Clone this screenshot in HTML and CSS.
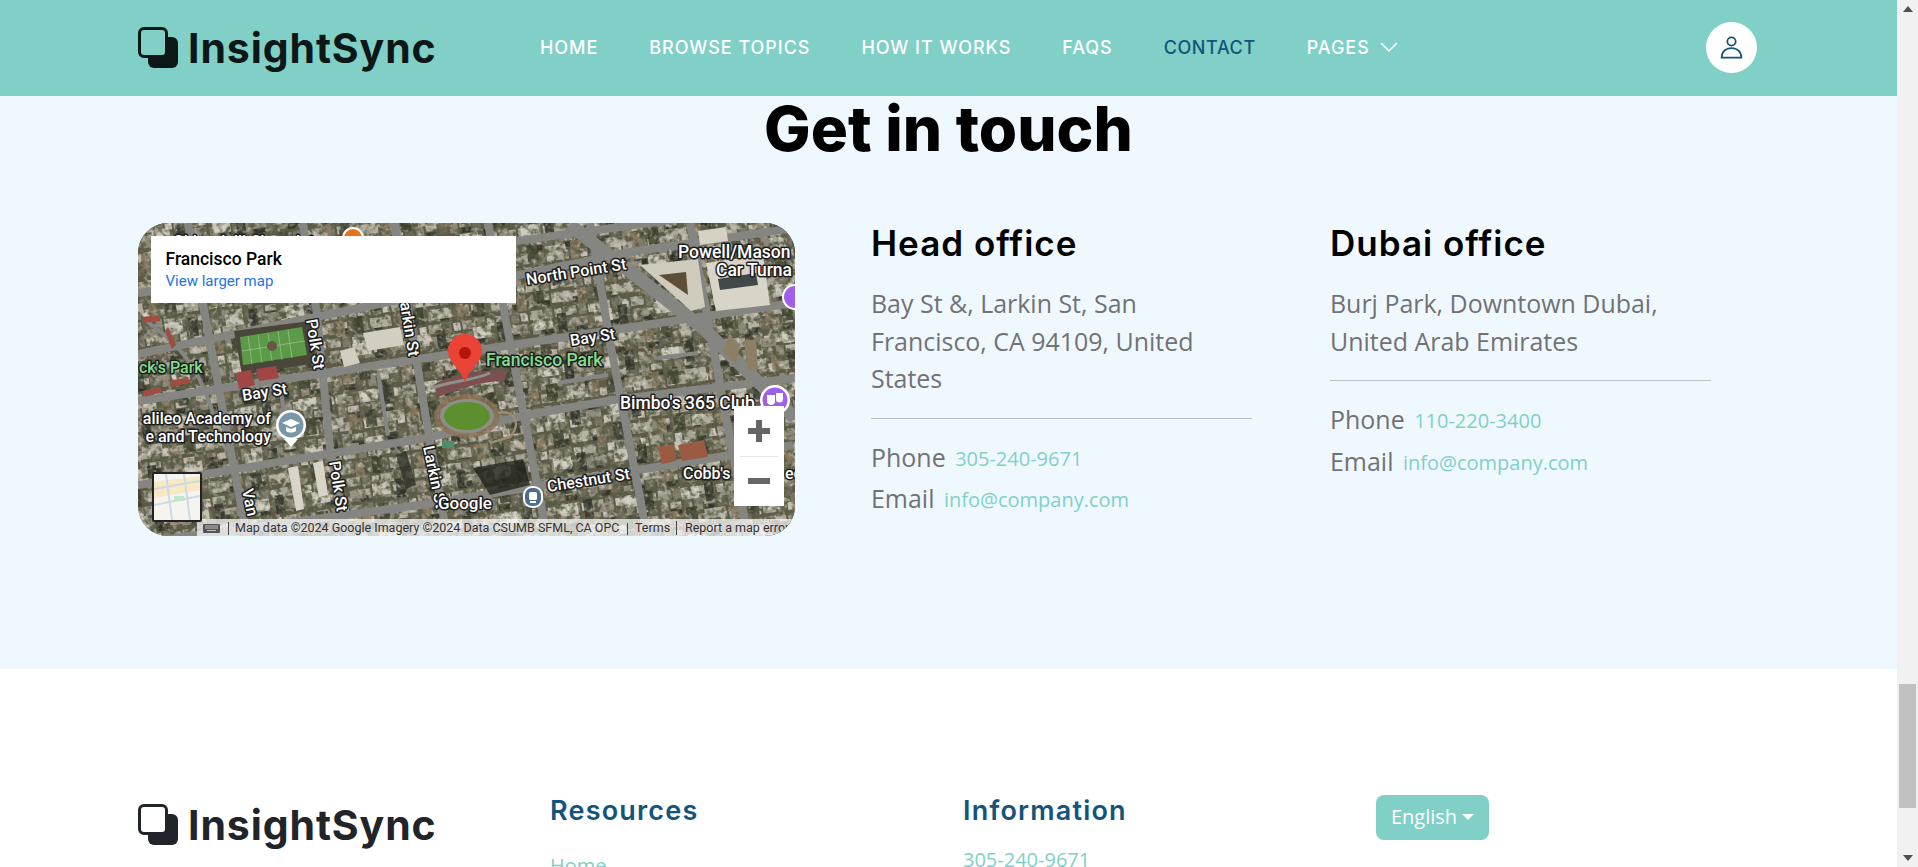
FILE: index.html
```html
<!DOCTYPE html>
<html lang="en">
<head>
<meta charset="utf-8">
<title>InsightSync - Contact</title>
<link rel="stylesheet" href="styles.css">
</head>
<body>
<div class="page">
  <header class="topbar">
    <a class="brand" href="#">
      <svg class="brand-icon" viewBox="0 0 40 42"><rect x="10" y="10" width="30" height="31" rx="6" fill="#0d1716"/><rect x="1.5" y="1.5" width="27" height="28" rx="4.5" fill="#80d0c7" stroke="#0d1716" stroke-width="3"/></svg>
      <span class="brand-name">InsightSync</span>
    </a>
    <nav class="menu">
      <a href="#">HOME</a>
      <a href="#">BROWSE TOPICS</a>
      <a href="#">HOW IT WORKS</a>
      <a href="#">FAQS</a>
      <a href="#" class="active">CONTACT</a>
      <a href="#" class="with-chevron">PAGES
        <svg class="chevron" viewBox="0 0 18 10"><path d="M1 1l8 8 8-8" fill="none" stroke="#fff" stroke-width="1.6"/></svg>
      </a>
    </nav>
    <a class="avatar" href="#" aria-label="Profile">
      <svg viewBox="0 0 24 24" width="25" height="25"><circle cx="12" cy="6.2" r="4" fill="none" stroke="#13547a" stroke-width="1.7"/><path d="M2.500 21.800c0-5.500 4-9.300 9.500-9.300s9.500 3.800 9.500 9.300z" fill="none" stroke="#13547a" stroke-width="1.7"/></svg>
    </a>
  </header>

  <section class="contact">
    <h2 class="contact-title">Get in touch</h2>
    <div class="contact-grid">
      <div class="map-cell">
        <div class="map">
          <svg class="map-art" viewBox="0 0 657 313" width="657" height="313">
            <defs>
              <pattern id="lots" width="34" height="28" patternUnits="userSpaceOnUse" patternTransform="rotate(-8)">
                <rect width="34" height="28" fill="#5c5a46"/>
                <rect x="1" y="2" width="13" height="9" fill="#a9a498"/>
                <rect x="16" y="1" width="8" height="11" fill="#7e7a6a"/>
                <rect x="26" y="3" width="7" height="8" fill="#c5c0b4"/>
                <rect x="2" y="14" width="8" height="12" fill="#8c8778"/>
                <rect x="12" y="15" width="11" height="6" fill="#b7b2a5"/>
                <rect x="25" y="14" width="8" height="11" fill="#6e6a58"/>
                <rect x="12" y="22" width="11" height="5" fill="#33352a"/>
              </pattern>
              <pattern id="lots2" width="61" height="47" patternUnits="userSpaceOnUse" patternTransform="rotate(-8) translate(9 5)">
                <rect x="3" y="4" width="18" height="12" fill="#d6d2c6"/>
                <rect x="27" y="2" width="9" height="19" fill="#2d2f27"/>
                <rect x="42" y="8" width="15" height="9" fill="#9a9485"/>
                <rect x="6" y="24" width="11" height="17" fill="#3a3d2c"/>
                <rect x="24" y="28" width="21" height="10" fill="#beb9ab"/>
                <rect x="50" y="26" width="9" height="16" fill="#8d7c64"/>
              </pattern>
              <filter id="darkmottle" x="0" y="0" width="100%" height="100%">
                <feTurbulence type="fractalNoise" baseFrequency="0.16" numOctaves="3" seed="7"/>
                <feColorMatrix type="matrix" values="0 0 0 0 0.1  0 0 0 0 0.11  0 0 0 0 0.06  3.2 0 0 0 -1.35"/>
              </filter>
              <filter id="lightmottle" x="0" y="0" width="100%" height="100%">
                <feTurbulence type="fractalNoise" baseFrequency="0.2" numOctaves="2" seed="21"/>
                <feColorMatrix type="matrix" values="0 0 0 0 0.82  0 0 0 0 0.79  0 0 0 0 0.72  3.8 0 0 0 -2.1"/>
              </filter>
            </defs>
            <rect width="657" height="313" fill="#6a6856"/>
            <rect width="657" height="313" fill="url(#lots)"/>
            <rect width="657" height="313" fill="url(#lots2)" opacity=".85"/>
            <rect width="657" height="313" filter="url(#darkmottle)"/>
            <rect width="657" height="313" filter="url(#lightmottle)" opacity=".5"/>

            <g class="roads">
              <path d="M0 178L655 80"/>
              <path d="M0 131L492 29L657 5"/>
              <path d="M0 262L288 215L389 192L475 177L657 155"/>
              <path d="M0 320L282 282L655 222"/>
              <path d="M0 70L657 -20"/>
              <path d="M50 0L65 82L92 225L109 313"/>
              <path d="M165 0L179 92L192 225L209 313"/>
              <path d="M257 0L269 79L282 159L292 219L309 313"/>
              <path d="M350 0L365 82L389 209L409 313"/>
              <path d="M452 0L472 119L502 275L509 313"/>
              <path d="M552 0L569 92L599 252L609 313"/>
              <path class="wide" d="M432 2L565 105L657 195"/>
              <path class="thin" d="M6 96C30 115 58 130 78 200"/>
              <path class="thin" d="M420 160L470 152M520 135L560 130M240 150L250 212M140 150L150 215"/>
            </g>

            <!-- field and large roofs -->
            <path d="M96 108L172 98L178 140L104 152z" fill="#4a463a"/>
            <path d="M102 114L164 104L169 132L105 142z" fill="#5b9a48"/>
            <path d="M110 113L114 141M120 112L124 140M130 110L134 138M140 108L144 137M150 107L154 135M104 128L167 118" stroke="#a8d09c" stroke-width=".6" fill="none"/>
            <ellipse cx="134" cy="123" rx="5" ry="5" fill="#6a5648"/>
            <path d="M98 150L113 147L117 162L101 166zM118 146L138 143L141 155L121 158z" fill="#a14644"/>
            <path d="M4 94L22 92L22 98L6 100zM30 104L38 122L34 126L27 108zM5 168L22 164L24 169L7 174zM32 158L50 154L52 160L34 164z" fill="#a04c42"/>
            <path d="M502 42L560 36L567 84L553 88z" fill="#cfcbbd"/>
            <path d="M521 52L548 49L550 72z" fill="#5d4f37"/>
            <path d="M568 40L625 32L632 82L578 88z" fill="#d8d4c8"/>
            <path d="M580 56L618 50L620 62L582 67z" fill="#41484a"/>
            <path d="M560 8L588 4L590 18L562 22z" fill="#d5d1c4"/>
            <path d="M591 112L602 122L598 142L585 128zM606 118L618 116L620 146L610 148z" fill="#8d7f66"/>
            <path d="M520 224L536 221L538 238L524 241zM540 222L566 217L570 234L544 238z" fill="#9b5a42"/>
            <path d="M335 245L385 236L392 262L352 272z" fill="#22241c" opacity=".8"/>
            <path d="M258 232L268 228L278 262L268 266z" fill="#2f3128" opacity=".8"/>
            <path d="M150 245L160 243L166 286L158 288zM175 240L185 238L190 272L181 274z" fill="#d8d4c8"/>
            <path d="M202 128L216 124L222 140L206 144zM225 110L262 104L266 122L230 128z" fill="#d2cec1"/>

            <!-- Francisco Park -->
            <path d="M296 162C310 152 350 146 370 148L366 158C345 158 320 166 300 174z" fill="#7c4f50"/>
            <ellipse cx="329" cy="193" rx="33" ry="22" fill="#8d7257" opacity=".75"/>
            <ellipse cx="329" cy="193" rx="27" ry="17" fill="#8c8f86"/>
            <ellipse cx="329" cy="193" rx="23" ry="14" fill="#5d8f2e"/>
            <path d="M292 166C310 158 335 158 352 150" fill="none" stroke="#8f908a" stroke-width="3"/>
            <path d="M360 190C376 186 384 200 372 214L352 220" fill="none" stroke="#a18a72" stroke-width="2.500"/>
            <rect x="304" y="218" width="12" height="7" fill="#4e8d6a"/>

            <!-- place markers -->
            <circle cx="215" cy="15" r="11" fill="#fff"/><circle cx="215" cy="15" r="9" fill="#e8711a"/>
            <path d="M153 224l-7-8h14z" fill="#fff"/>
            <circle cx="153" cy="202" r="15" fill="#fff"/><circle cx="153" cy="202" r="12.500" fill="#7a97a8"/>
            <path d="M144 200l9-4 9 4-9 4z" fill="#fff"/><path d="M148 204v4c3 2 7 2 10 0v-4l-5 2z" fill="#fff"/>
            <rect x="385" y="263" width="20" height="22" rx="9" fill="#fff"/><rect x="387" y="265" width="16" height="18" rx="7" fill="#4e6d8a"/>
            <rect x="391" y="269" width="8" height="8" rx="1.500" fill="#fff"/><rect x="392" y="278" width="6" height="2" fill="#fff"/>
            <circle cx="637" cy="177" r="15" fill="#fff"/><circle cx="637" cy="177" r="12.500" fill="#a05fe8"/>
            <path d="M629 172h8v6a4 4 0 0 1-8 0zM638 170h7v6a3.500 3.500 0 0 1-7 0z" fill="#fff"/>
            <circle cx="657" cy="74" r="13" fill="#fff"/><circle cx="657" cy="74" r="11" fill="#a05fe8"/>

            <!-- labels -->
            <g class="labels">
              <text x="35" y="24">Ghirardelli Chocolate</text>
              <text x="389" y="62" transform="rotate(-9 389 62)">North Point St</text>
              <text class="big" x="540" y="35">Powell/Mason</text>
              <text class="big" x="578" y="53">Car Turna</text>
              <text x="433" y="123" transform="rotate(-9 433 123)">Bay St</text>
              <text x="105" y="178" transform="rotate(-9 105 178)">Bay St</text>
              <text x="168" y="97" transform="rotate(81 168 97)">Polk St</text>
              <text x="191" y="239" transform="rotate(81 191 239)">Polk St</text>
              <text x="262" y="80" transform="rotate(81 262 80)">arkin St</text>
              <text x="285" y="224" transform="rotate(78 285 224)">Larkin St</text>
              <text x="104" y="267" transform="rotate(78 104 267)">Van</text>
              <text x="133" y="201" text-anchor="end">alileo Academy of</text>
              <text x="133" y="219" text-anchor="end">e and Technology</text>
              <text class="big" x="482" y="186">Bimbo's 365 Club</text>
              <text x="410" y="269" transform="rotate(-9 410 269)">Chestnut St</text>
              <text x="545" y="256">Cobb's</text>
              <text x="647" y="256">ed</text>
              <text class="park big" x="348" y="143">Francisco Park</text>
              <text class="park" x="1" y="150">ck's Park</text>
              <text class="google" x="300" y="286">Google</text>
            </g>

            <!-- red pin -->
            <path d="M327 160c-3-13-17-21-17-32a17 17 0 0 1 34 0c0 11-14 19-17 32z" fill="#ea4335"/>
            <circle cx="327" cy="130" r="6" fill="#b3150d"/>

            <!-- attribution -->
            <rect x="59" y="296" width="598" height="17" fill="#fff" opacity=".72"/>
            <g fill="#444">
              <rect x="65" y="301" width="17" height="9" rx="1" fill="#555"/>
              <path d="M67 303h13M67 305h13M69 307.500h9" stroke="#ddd" stroke-width=".8"/>
              <rect x="90" y="299" width="1" height="13"/>
              <rect x="489" y="300" width="1" height="12"/>
              <rect x="538" y="298" width="1" height="14"/>
            </g>
            <g class="attrib">
              <text x="97" y="309">Map data ©2024 Google Imagery ©2024 Data CSUMB SFML, CA OPC</text>
              <text x="497" y="309">Terms</text>
              <text x="547" y="309">Report a map error</text>
            </g>
          </svg>

          <div class="place-card">
            <div class="place-name">Francisco Park</div>
            <a class="place-link" href="#">View larger map</a>
          </div>

          <div class="map-toggle">
            <svg viewBox="0 0 46 46" width="46" height="46">
              <rect width="46" height="46" fill="#f6f4ef"/>
              <path d="M0 8L46 2V16L0 24z" fill="#f8e8c4"/>
              <path d="M0 15L46 7M0 31L46 22M12 0L18 46M30 0L36 46" stroke="#cdd9e3" stroke-width="2" fill="none"/>
              <rect x="20" y="22" width="10" height="5" fill="#bfe8c8"/>
            </svg>
          </div>

          <div class="zoom-box">
            <button class="zoom-btn" type="button" aria-label="Zoom in"><svg viewBox="0 0 22 22" width="22" height="22"><path d="M8 0h6v8h8v6h-8v8H8v-8H0V8h8z" fill="#666"/></svg></button>
            <span class="zoom-rule"></span>
            <button class="zoom-btn" type="button" aria-label="Zoom out"><svg viewBox="0 0 22 6" width="22" height="6"><rect width="22" height="6" fill="#666"/></svg></button>
          </div>
        </div>
      </div>

      <div class="office">
        <h4 class="office-title">Head office</h4>
        <p class="office-address">Bay St &amp;, Larkin St, San Francisco, CA 94109, United States</p>
        <hr class="office-rule">
        <p class="office-line">Phone <a href="#">305-240-9671</a></p>
        <p class="office-line">Email <a href="#">info@company.com</a></p>
      </div>

      <div class="office">
        <h4 class="office-title">Dubai office</h4>
        <p class="office-address">Burj Park, Downtown Dubai, United Arab Emirates</p>
        <hr class="office-rule">
        <p class="office-line">Phone <a href="#">110-220-3400</a></p>
        <p class="office-line">Email <a href="#">info@company.com</a></p>
      </div>
    </div>
  </section>

  <footer class="footer">
    <a class="brand footer-brand" href="#">
      <svg class="brand-icon" viewBox="0 0 40 42"><rect x="10" y="10" width="30" height="31" rx="6" fill="#212529"/><rect x="1.5" y="1.5" width="27" height="28" rx="4.500" fill="#fff" stroke="#212529" stroke-width="3"/></svg>
      <span class="brand-name">InsightSync</span>
    </a>
    <div class="footer-col">
      <h6 class="footer-title">Resources</h6>
      <a href="#">Home</a>
    </div>
    <div class="footer-col info">
      <h6 class="footer-title">Information</h6>
      <a href="#">305-240-9671</a>
    </div>
    <div class="footer-col lang">
      <button class="lang-btn" type="button">English<span class="caret"></span></button>
    </div>
  </footer>
</div>

<aside class="scrollbar" aria-hidden="true">
  <span class="arrow up"></span>
  <span class="thumb"></span>
  <span class="arrow down"></span>
</aside>
</body>
</html>
```

FILE: styles.css
```css
* { box-sizing: border-box; }
html, body { margin: 0; height: 867px; overflow: hidden; }
body { display: flex; background: #fff; font-family: "Open Sans", sans-serif; color: #717275; }
a { text-decoration: none; }

.page { width: 1897px; height: 867px; flex: none; overflow: hidden; }

/* top navigation */
.topbar { height: 96px; background: #80d0c7; display: flex; align-items: center; padding: 0 140px 0 138px; }
.brand { display: flex; align-items: center; width: 297px; color: #0d1716; flex: none; }
.brand-icon { width: 40px; height: 42px; flex: none; }
.brand-name { font-family: Inter, sans-serif; font-weight: 700; font-size: 41px; letter-spacing: .9px; margin-left: 10px; line-height: 1; white-space: nowrap; }
.menu { display: flex; align-items: center; gap: 51px; margin-left: 105px; margin-top: -2px; }
.menu a { font-family: Inter, sans-serif; font-weight: 500; font-size: 18px; letter-spacing: .95px; color: #fff; white-space: nowrap; }
.menu a.active { color: #13547a; letter-spacing: .6px; }
.with-chevron { display: flex; align-items: center; gap: 10px; }
.chevron { width: 18px; height: 10px; }
.avatar { margin-left: auto; width: 51px; height: 51px; border-radius: 50%; background: #fff; display: flex; align-items: center; justify-content: center; margin-top: -2px; }

/* contact section */
.contact { height: 573px; background: #f0f8ff; padding: 0 0 0 138px; }
.contact-title { margin: 0 0 0 -138px; padding-top: 2px; height: 127px; font-family: Inter, sans-serif; font-weight: 800; font-size: 62px; line-height: 62px; color: #000; text-align: center; }
.contact-grid { display: grid; grid-template-columns: 733px 459px 381px; align-items: start; }
.map-cell { width: 657px; }
.map { position: relative; width: 657px; height: 313px; border-radius: 30px; overflow: hidden; }
.map-art { display: block; }
.roads path { fill: none; stroke: #858582; stroke-width: 8; }
.roads path.wide { stroke-width: 13; }
.roads path.thin { stroke-width: 4; }
.labels text { font-family: Roboto, sans-serif; font-weight: 500; font-size: 16px; fill: #fff; stroke: #1d1d1d; stroke-width: 3px; paint-order: stroke; stroke-linejoin: round; }
.labels text.big { font-size: 17.500px; }
.labels text.park { fill: #84dc8c; }
.labels text.google { font-size: 17px; }
.attrib text { font-family: Roboto, sans-serif; font-size: 12.500px; fill: #333; }

.place-card { position: absolute; left: 13px; top: 13px; width: 365px; height: 67px; background: #fff; padding: 13px 14.500px; font-family: Roboto, sans-serif; }
.place-name { font-size: 17.500px; font-weight: 500; line-height: 20px; color: #000; }
.place-link { display: block; font-size: 15px; line-height: 18px; margin-top: 3px; color: #1a73e8; }
.map-toggle { position: absolute; left: 14px; top: 249px; width: 50px; height: 50px; border: 2px solid #222; border-radius: 2px; overflow: hidden; }
.map-toggle svg { display: block; }
.zoom-box { position: absolute; left: 596px; top: 183px; width: 50px; height: 100px; background: #fff; display: flex; flex-direction: column; align-items: center; }
.zoom-btn { width: 50px; height: 49.5px; padding: 0; border: 0; background: none; display: flex; align-items: center; justify-content: center; }
.zoom-rule { width: 38px; height: 1px; background: #e6e6e6; flex: none; }

/* office columns */
.office { width: 381px; }
.office-title { margin: -1px 0 0; font-family: Inter, sans-serif; font-weight: 600; font-size: 35px; letter-spacing: 1px; line-height: 42px; color: #000; }
.office-address { margin: 21px 0 0; font-size: 24.96px; line-height: 37.5px; }
.office-rule { border: 0; height: 1px; background: #b9c0cb; margin: 20px 0 0; }
.office-line { margin: 0; font-size: 24.96px; line-height: 41.5px; white-space: nowrap; }
.office-rule + .office-line { margin-top: 18px; }
.office-line a { color: #80d0c7; font-size: 20px; line-height: 1; margin-left: 3px; vertical-align: 1px; }

/* footer */
.footer { position: relative; display: grid; grid-template-columns: 412px 413px 413px 1fr; padding: 126px 0 0 138px; background: #fff; color: #212529; }
.footer .brand { color: #212529; margin-top: 9px; align-self: start; }
.footer-title { margin: -1px 0 0; font-family: Inter, sans-serif; font-weight: 600; font-size: 27px; letter-spacing: 1.2px; line-height: 34px; color: #13547a; }
.footer-col a { display: block; color: #80d0c7; font-size: 20px; line-height: 28px; margin-top: 24px; }
.footer-col.info a { margin-top: 18px; }
.lang-btn { width: 113px; height: 45px; border: 0; border-radius: 8px; background: #80d0c7; color: #fff; font-family: "Open Sans", sans-serif; font-size: 20px; line-height: 24px; padding: 0 0 2px; display: flex; align-items: center; justify-content: center; }
.caret { width: 0; height: 0; margin-left: 5px; border: 6px solid transparent; border-top-color: #fff; border-bottom: 0; }

/* fake window scrollbar */
.scrollbar { width: 21px; height: 867px; flex: none; background: #f1f1f1; position: relative; }
.arrow { position: absolute; left: 6px; width: 0; height: 0; border: 5px solid transparent; }
.arrow.up { top: 6px; border-top: 0; border-bottom: 6px solid #505050; }
.arrow.down { bottom: 6px; border-bottom: 0; border-top: 6px solid #505050; }
.thumb { position: absolute; left: 2px; top: 684px; width: 17px; height: 124px; background: #c1c1c1; }
```
